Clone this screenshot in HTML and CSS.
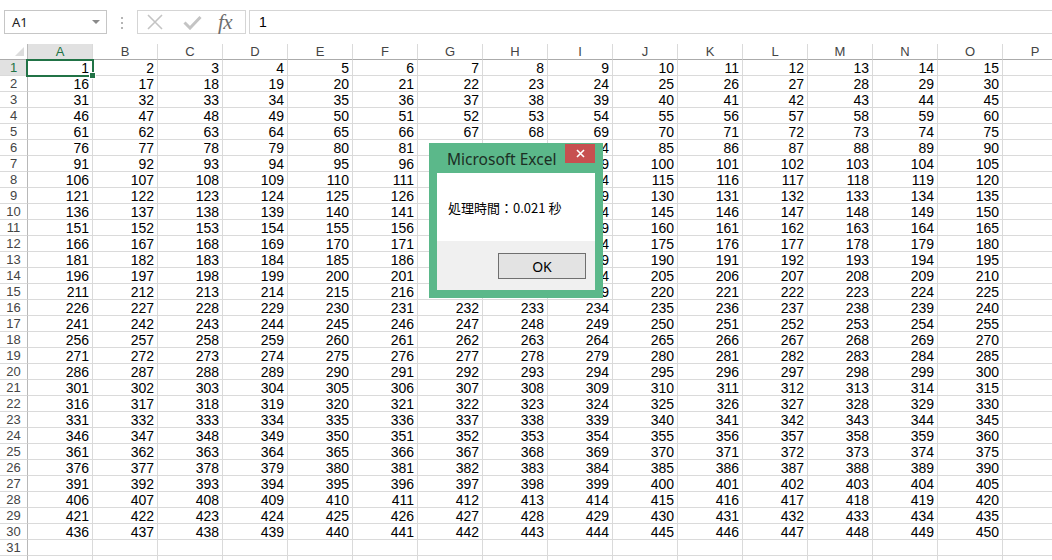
FILE: index.html
```html
<!DOCTYPE html>
<html lang="ja">
<head>
<meta charset="utf-8">
<title>Excel</title>
<link rel="stylesheet" href="styles.css">
</head>
<body>
<div class="fbar">
  <div class="namebox"><span>A1</span><span class="caret"></span></div>
  <div class="grip"><i></i><i></i><i></i></div>
  <div class="fbtns">
    <svg class="ic-x" width="16" height="16" viewBox="0 0 16 16"><path d="M1 1L15 15M15 1L1 15" stroke="#c4c4c4" stroke-width="1.6" fill="none"/></svg>
    <svg class="ic-ok" width="19" height="15" viewBox="0 0 19 15"><path d="M1.5 7.5L7 13L17.5 2" stroke="#c4c4c4" stroke-width="3" fill="none"/></svg>
    <span class="fx">fx</span>
  </div>
  <div class="finput">1</div>
</div>
<div class="sheet">
<table class="grid">
<tr class="hd"><th class="corner"></th><th class="sel">A</th><th>B</th><th>C</th><th>D</th><th>E</th><th>F</th><th>G</th><th>H</th><th>I</th><th>J</th><th>K</th><th>L</th><th>M</th><th>N</th><th>O</th><th>P</th></tr>
<tr><th class="sel">1</th><td>1</td><td>2</td><td>3</td><td>4</td><td>5</td><td>6</td><td>7</td><td>8</td><td>9</td><td>10</td><td>11</td><td>12</td><td>13</td><td>14</td><td>15</td><td></td></tr>
<tr><th>2</th><td>16</td><td>17</td><td>18</td><td>19</td><td>20</td><td>21</td><td>22</td><td>23</td><td>24</td><td>25</td><td>26</td><td>27</td><td>28</td><td>29</td><td>30</td><td></td></tr>
<tr><th>3</th><td>31</td><td>32</td><td>33</td><td>34</td><td>35</td><td>36</td><td>37</td><td>38</td><td>39</td><td>40</td><td>41</td><td>42</td><td>43</td><td>44</td><td>45</td><td></td></tr>
<tr><th>4</th><td>46</td><td>47</td><td>48</td><td>49</td><td>50</td><td>51</td><td>52</td><td>53</td><td>54</td><td>55</td><td>56</td><td>57</td><td>58</td><td>59</td><td>60</td><td></td></tr>
<tr><th>5</th><td>61</td><td>62</td><td>63</td><td>64</td><td>65</td><td>66</td><td>67</td><td>68</td><td>69</td><td>70</td><td>71</td><td>72</td><td>73</td><td>74</td><td>75</td><td></td></tr>
<tr><th>6</th><td>76</td><td>77</td><td>78</td><td>79</td><td>80</td><td>81</td><td>82</td><td>83</td><td>84</td><td>85</td><td>86</td><td>87</td><td>88</td><td>89</td><td>90</td><td></td></tr>
<tr><th>7</th><td>91</td><td>92</td><td>93</td><td>94</td><td>95</td><td>96</td><td>97</td><td>98</td><td>99</td><td>100</td><td>101</td><td>102</td><td>103</td><td>104</td><td>105</td><td></td></tr>
<tr><th>8</th><td>106</td><td>107</td><td>108</td><td>109</td><td>110</td><td>111</td><td>112</td><td>113</td><td>114</td><td>115</td><td>116</td><td>117</td><td>118</td><td>119</td><td>120</td><td></td></tr>
<tr><th>9</th><td>121</td><td>122</td><td>123</td><td>124</td><td>125</td><td>126</td><td>127</td><td>128</td><td>129</td><td>130</td><td>131</td><td>132</td><td>133</td><td>134</td><td>135</td><td></td></tr>
<tr><th>10</th><td>136</td><td>137</td><td>138</td><td>139</td><td>140</td><td>141</td><td>142</td><td>143</td><td>144</td><td>145</td><td>146</td><td>147</td><td>148</td><td>149</td><td>150</td><td></td></tr>
<tr><th>11</th><td>151</td><td>152</td><td>153</td><td>154</td><td>155</td><td>156</td><td>157</td><td>158</td><td>159</td><td>160</td><td>161</td><td>162</td><td>163</td><td>164</td><td>165</td><td></td></tr>
<tr><th>12</th><td>166</td><td>167</td><td>168</td><td>169</td><td>170</td><td>171</td><td>172</td><td>173</td><td>174</td><td>175</td><td>176</td><td>177</td><td>178</td><td>179</td><td>180</td><td></td></tr>
<tr><th>13</th><td>181</td><td>182</td><td>183</td><td>184</td><td>185</td><td>186</td><td>187</td><td>188</td><td>189</td><td>190</td><td>191</td><td>192</td><td>193</td><td>194</td><td>195</td><td></td></tr>
<tr><th>14</th><td>196</td><td>197</td><td>198</td><td>199</td><td>200</td><td>201</td><td>202</td><td>203</td><td>204</td><td>205</td><td>206</td><td>207</td><td>208</td><td>209</td><td>210</td><td></td></tr>
<tr><th>15</th><td>211</td><td>212</td><td>213</td><td>214</td><td>215</td><td>216</td><td>217</td><td>218</td><td>219</td><td>220</td><td>221</td><td>222</td><td>223</td><td>224</td><td>225</td><td></td></tr>
<tr><th>16</th><td>226</td><td>227</td><td>228</td><td>229</td><td>230</td><td>231</td><td>232</td><td>233</td><td>234</td><td>235</td><td>236</td><td>237</td><td>238</td><td>239</td><td>240</td><td></td></tr>
<tr><th>17</th><td>241</td><td>242</td><td>243</td><td>244</td><td>245</td><td>246</td><td>247</td><td>248</td><td>249</td><td>250</td><td>251</td><td>252</td><td>253</td><td>254</td><td>255</td><td></td></tr>
<tr><th>18</th><td>256</td><td>257</td><td>258</td><td>259</td><td>260</td><td>261</td><td>262</td><td>263</td><td>264</td><td>265</td><td>266</td><td>267</td><td>268</td><td>269</td><td>270</td><td></td></tr>
<tr><th>19</th><td>271</td><td>272</td><td>273</td><td>274</td><td>275</td><td>276</td><td>277</td><td>278</td><td>279</td><td>280</td><td>281</td><td>282</td><td>283</td><td>284</td><td>285</td><td></td></tr>
<tr><th>20</th><td>286</td><td>287</td><td>288</td><td>289</td><td>290</td><td>291</td><td>292</td><td>293</td><td>294</td><td>295</td><td>296</td><td>297</td><td>298</td><td>299</td><td>300</td><td></td></tr>
<tr><th>21</th><td>301</td><td>302</td><td>303</td><td>304</td><td>305</td><td>306</td><td>307</td><td>308</td><td>309</td><td>310</td><td>311</td><td>312</td><td>313</td><td>314</td><td>315</td><td></td></tr>
<tr><th>22</th><td>316</td><td>317</td><td>318</td><td>319</td><td>320</td><td>321</td><td>322</td><td>323</td><td>324</td><td>325</td><td>326</td><td>327</td><td>328</td><td>329</td><td>330</td><td></td></tr>
<tr><th>23</th><td>331</td><td>332</td><td>333</td><td>334</td><td>335</td><td>336</td><td>337</td><td>338</td><td>339</td><td>340</td><td>341</td><td>342</td><td>343</td><td>344</td><td>345</td><td></td></tr>
<tr><th>24</th><td>346</td><td>347</td><td>348</td><td>349</td><td>350</td><td>351</td><td>352</td><td>353</td><td>354</td><td>355</td><td>356</td><td>357</td><td>358</td><td>359</td><td>360</td><td></td></tr>
<tr><th>25</th><td>361</td><td>362</td><td>363</td><td>364</td><td>365</td><td>366</td><td>367</td><td>368</td><td>369</td><td>370</td><td>371</td><td>372</td><td>373</td><td>374</td><td>375</td><td></td></tr>
<tr><th>26</th><td>376</td><td>377</td><td>378</td><td>379</td><td>380</td><td>381</td><td>382</td><td>383</td><td>384</td><td>385</td><td>386</td><td>387</td><td>388</td><td>389</td><td>390</td><td></td></tr>
<tr><th>27</th><td>391</td><td>392</td><td>393</td><td>394</td><td>395</td><td>396</td><td>397</td><td>398</td><td>399</td><td>400</td><td>401</td><td>402</td><td>403</td><td>404</td><td>405</td><td></td></tr>
<tr><th>28</th><td>406</td><td>407</td><td>408</td><td>409</td><td>410</td><td>411</td><td>412</td><td>413</td><td>414</td><td>415</td><td>416</td><td>417</td><td>418</td><td>419</td><td>420</td><td></td></tr>
<tr><th>29</th><td>421</td><td>422</td><td>423</td><td>424</td><td>425</td><td>426</td><td>427</td><td>428</td><td>429</td><td>430</td><td>431</td><td>432</td><td>433</td><td>434</td><td>435</td><td></td></tr>
<tr><th>30</th><td>436</td><td>437</td><td>438</td><td>439</td><td>440</td><td>441</td><td>442</td><td>443</td><td>444</td><td>445</td><td>446</td><td>447</td><td>448</td><td>449</td><td>450</td><td></td></tr>
<tr><th>31</th><td></td><td></td><td></td><td></td><td></td><td></td><td></td><td></td><td></td><td></td><td></td><td></td><td></td><td></td><td></td><td></td></tr>
<tr><th></th><td></td><td></td><td></td><td></td><td></td><td></td><td></td><td></td><td></td><td></td><td></td><td></td><td></td><td></td><td></td><td></td></tr>
</table>
<div class="selection"><span class="handle"></span></div>
<div class="dialog">
  <div class="dlg-title">
    <span class="dlg-caption">Microsoft Excel</span>
    <span class="dlg-close"><svg width="9" height="9" viewBox="0 0 9 9"><path d="M1 1L8 8M8 1L1 8" stroke="#fff" stroke-width="1.6" fill="none"/></svg></span>
  </div>
  <div class="dlg-client">
    <div class="dlg-msg">処理時間：0.021 秒</div>
    <div class="dlg-foot"><button class="dlg-btn">OK</button></div>
  </div>
</div>
</div>
</body>
</html>
```
FILE: styles.css
```css
html, body {
  margin: 0;
  padding: 0;
  background: #fff;
  overflow: hidden;
}
body {
  width: 1052px;
  height: 560px;
  font-family: "Liberation Sans", Arial, sans-serif;
  color: #000;
}

/* formula bar */
.fbar {
  height: 44px;
  box-sizing: border-box;
  padding: 10px 0 0 4px;
  display: flex;
  align-items: flex-start;
}
.namebox {
  width: 103px;
  height: 24px;
  box-sizing: border-box;
  border: 1px solid #c6c6c6;
  display: flex;
  align-items: center;
  justify-content: space-between;
  padding: 0 6px 0 7px;
  font-family: "Noto Sans", sans-serif;
  font-size: 13px;
  color: #222;
}
.caret {
  width: 0;
  height: 0;
  border-left: 4px solid transparent;
  border-right: 4px solid transparent;
  border-top: 4px solid #8a8a8a;
}
.grip {
  margin: 7px 0 0 14px;
  display: flex;
  flex-direction: column;
  gap: 3px;
}
.grip i {
  display: block;
  width: 2px;
  height: 2px;
  background: #b5b5b5;
}
.fbtns {
  margin-left: 14px;
  width: 109px;
  height: 24px;
  box-sizing: border-box;
  border: 1px solid #d5d5d5;
  display: flex;
  align-items: center;
}
.ic-x { margin-left: 9px; }
.ic-ok { margin-left: 20px; }
.fx {
  margin-left: 16px;
  font-family: "Liberation Serif", "Times New Roman", serif;
  font-style: italic;
  font-size: 21px;
  color: #6e6e6e;
  line-height: 20px;
  letter-spacing: -0.5px;
}
.finput {
  margin-left: 3px;
  flex: 1;
  height: 24px;
  box-sizing: border-box;
  border: 1px solid #d5d5d5;
  border-right: none;
  display: flex;
  align-items: center;
  padding-left: 9px;
  font-size: 14px;
}

/* sheet */
.sheet {
  position: relative;
  height: 516px;
  overflow: hidden;
}
.grid {
  border-collapse: separate;
  border-spacing: 0;
  table-layout: fixed;
  width: 1068px;
  font-size: 14px;
}
.grid td {
  width: 61px;
  height: 14px;
  padding: 1px 3px 0 0;
  line-height: 14px;
  text-align: right;
  border-right: 1px solid #dadada;
  border-bottom: 1px solid #dadada;
  white-space: nowrap;
  overflow: hidden;
}
.grid th {
  width: 27px;
  height: 14px;
  padding: 1px 0 0 0;
  line-height: 14px;
  font-weight: normal;
  font-size: 13px;
  color: #444;
  text-align: center;
  border-right: 1px solid #b8b8b8;
  border-bottom: 1px solid #dadada;
  background: #fff;
  overflow: hidden;
}
.grid .hd th {
  width: 64px;
  border-right: 1px solid #dadada;
  border-bottom: 1px solid #ababab;
}
.grid .hd th.corner {
  width: 27px;
  position: relative;
  border-right: 1px solid #b8b8b8;
}
.corner::after {
  content: "";
  position: absolute;
  right: 3px;
  bottom: 3px;
  border-left: 9px solid transparent;
  border-bottom: 9px solid #dcdcdc;
}
.grid th.sel {
  background: #e1e1e1;
  color: #217346;
}

.selection {
  position: absolute;
  left: 26px;
  top: 15px;
  width: 68px;
  height: 18px;
  box-sizing: border-box;
  border: 2px solid #217346;
}
.handle {
  position: absolute;
  right: -4px;
  bottom: -4px;
  width: 5px;
  height: 5px;
  background: #217346;
  border: 1px solid #fff;
}

/* dialog */
.dialog {
  position: absolute;
  left: 429px;
  top: 99px;
  width: 174px;
  height: 155px;
  box-sizing: border-box;
  padding: 0 8px 8px;
  background: #5bb88a;
  display: flex;
  flex-direction: column;
}
.dlg-title {
  height: 30px;
  flex: none;
  display: flex;
  justify-content: space-between;
  align-items: flex-start;
}
.dlg-caption {
  margin: 5px 0 0 10px;
  font-family: "Noto Sans", sans-serif;
  font-size: 15.5px;
  line-height: 22px;
  color: #1c2f24;
}
.dlg-close {
  margin-top: 1px;
  width: 30px;
  height: 19px;
  background: #c75050;
  display: flex;
  align-items: center;
  justify-content: center;
}
.dlg-client {
  flex: 1;
  background: #fff;
  display: flex;
  flex-direction: column;
}
.dlg-msg {
  height: 68px;
  box-sizing: border-box;
  padding: 26px 0 0 11px;
  font-family: "Noto Sans CJK JP", sans-serif;
  font-size: 13px;
  line-height: 18px;
  color: #000;
}
.dlg-foot {
  flex: 1;
  background: #f0f0f0;
  display: flex;
  justify-content: flex-end;
  align-items: flex-start;
  padding: 12px 9px 0 0;
}
.dlg-btn {
  width: 88px;
  height: 26px;
  box-sizing: border-box;
  margin: 0;
  border: 1px solid #6f6f6f;
  background: #e3e3e3;
  font-family: "Noto Sans", sans-serif;
  font-size: 14px;
  color: #000;
  padding: 0;
}
```
